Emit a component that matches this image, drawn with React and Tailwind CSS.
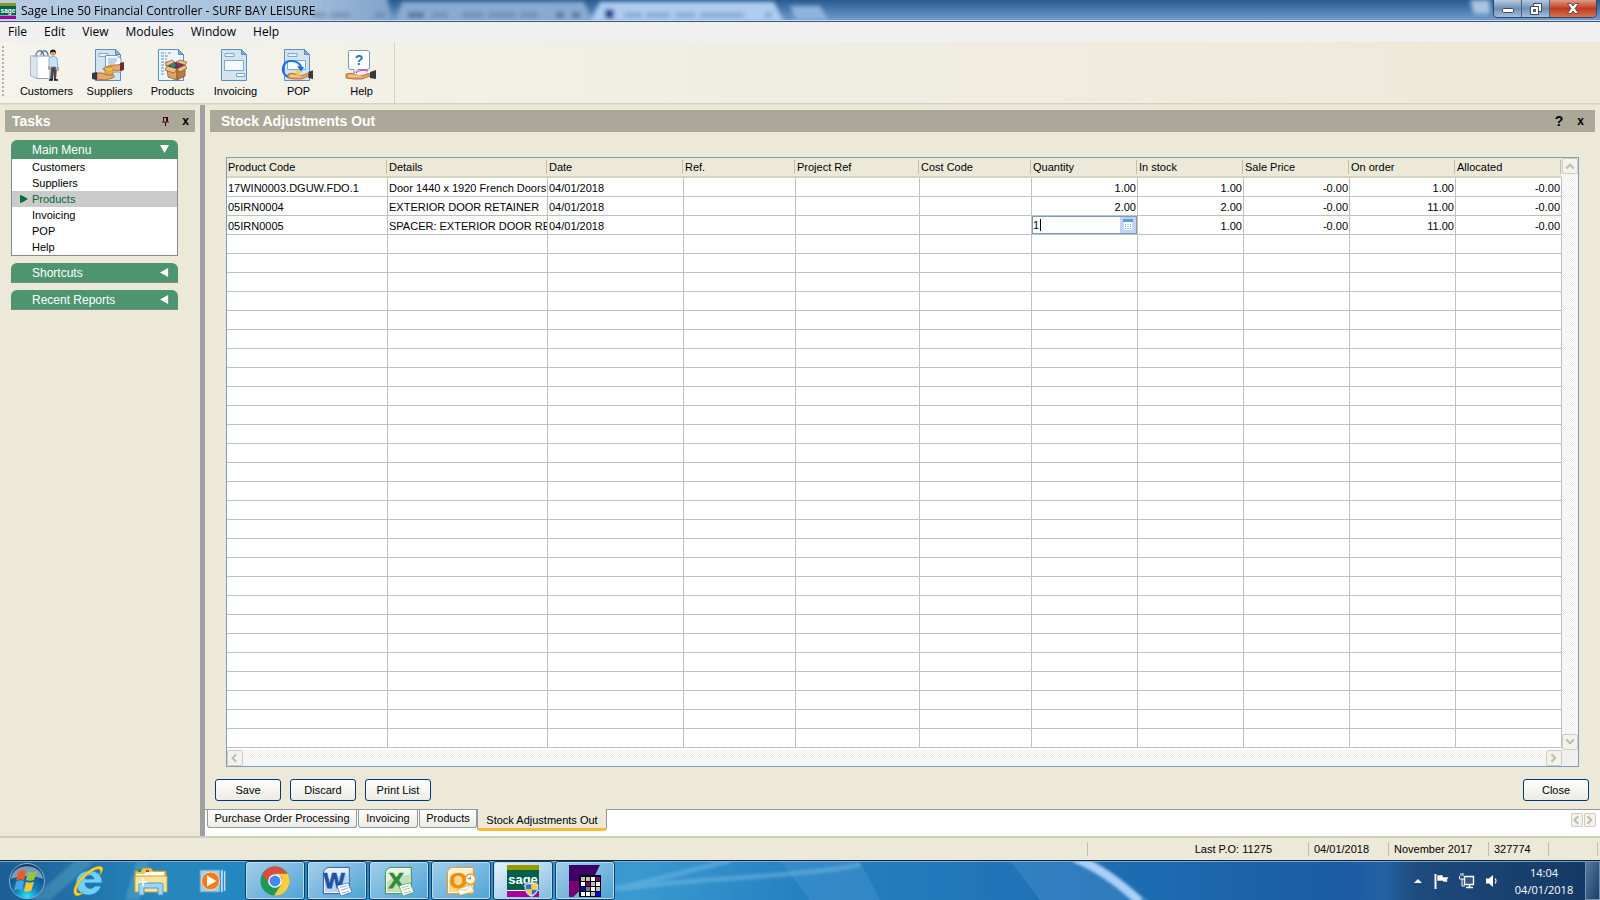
import { useState } from 'react'

const menus = ['File', 'Edit', 'View', 'Modules', 'Window', 'Help']

const modules = ['Customers', 'Suppliers', 'Products', 'Invoicing', 'POP', 'Help']

const columns = [
  { key: 'code', label: 'Product Code', width: 'w-[161px]' },
  { key: 'details', label: 'Details', width: 'w-[160px]' },
  { key: 'date', label: 'Date', width: 'w-[136px]' },
  { key: 'ref', label: 'Ref.', width: 'w-[112px]' },
  { key: 'projectRef', label: 'Project Ref', width: 'w-[124px]' },
  { key: 'costCode', label: 'Cost Code', width: 'w-[112px]' },
  { key: 'quantity', label: 'Quantity', width: 'w-[106px]', numeric: true },
  { key: 'inStock', label: 'In stock', width: 'w-[106px]', numeric: true },
  { key: 'salePrice', label: 'Sale Price', width: 'w-[106px]', numeric: true },
  { key: 'onOrder', label: 'On order', width: 'w-[106px]', numeric: true },
  { key: 'allocated', label: 'Allocated', width: 'w-[106px]', numeric: true },
]

const items = [
  { code: '17WIN0003.DGUW.FDO.1', details: 'Door 1440 x 1920 French Doors', date: '04/01/2018', quantity: '1.00', inStock: '1.00', salePrice: '-0.00', onOrder: '1.00', allocated: '-0.00' },
  { code: '05IRN0004', details: 'EXTERIOR DOOR RETAINER', date: '04/01/2018', quantity: '2.00', inStock: '2.00', salePrice: '-0.00', onOrder: '11.00', allocated: '-0.00' },
  { code: '05IRN0005', details: 'SPACER: EXTERIOR DOOR RE', date: '04/01/2018', editing: true, inStock: '1.00', salePrice: '-0.00', onOrder: '11.00', allocated: '-0.00' },
]

const rows = Array.from({ length: 30 }, (_, index) => items[index] || {})

const tabs = [
  { label: 'Purchase Order Processing', width: 'w-[150px]' },
  { label: 'Invoicing', width: 'w-[60px]' },
  { label: 'Products', width: 'w-[58px]' },
]

function SageLogo({ className }) {
  return <svg className={className} viewBox="0 0 32 32" aria-hidden="true">
    <rect width="32" height="32" fill="#fff" />
    <rect width="32" height="5" fill="#9a9a00" />
    <rect y="5" width="32" height="20" fill="#00614a" />
    <rect y="26" width="32" height="6" fill="#a800a0" />
    <text x="16" y="19" fill="#fff" fontFamily="Liberation Sans, sans-serif" fontWeight="700" fontSize="13" textAnchor="middle">sage</text>
  </svg>
}

function Sheet() {
  return <>
    <path d="M3.500 .5h20l5 5v26h-25z" fill="#d3e3f0" stroke="#5d8fba" />
    <path d="M23.500 .5v5h5z" fill="#7fb0d6" stroke="#5d8fba" />
    <path d="M7 4.500h9v3H7z" fill="#e8f2fa" stroke="#7ea8cc" />
  </>
}

function Hand() {
  return <>
    <path d="M0 25c4-1 7-1 10 1 3 1 7 1 11-1 2-1 4 0 3 2l-8 3H7l-7-1z" fill="#e8a765" stroke="#a05a28" strokeWidth=".8" />
    <path d="M24 23l6-2v9l-6-1z" fill="#38383c" />
    <path d="M3 27h12" stroke="#fbd9a8" strokeWidth="1.200" />
  </>
}

function ModuleIcon({ name }) {
  const drawings = {
    Customers: <>
      <path d="M7 7C7 0 14 0 15 7M12 6c1-6 7-5 7 1" fill="none" stroke="#5b7c99" strokeWidth="1.300" />
      <path d="M1.500 7H20v22.500H8l-6.500-3z" fill="#eef3f9" stroke="#8f9fb6" />
      <path d="M1.500 7L8 8v21.500l-6.500-3z" fill="#dde5f0" stroke="#a6b3c8" strokeWidth=".6" />
      <path d="M9 8h11v21H9z" fill="#fdfdff" />
      <path d="M22 18h6l-1 13h-2l-.5-8-.5 8h-3z" fill="#4a4a52" />
      <path d="M20 9c2-2 6-2 8 0l1 11-2 1v-3h-5v2h-2z" fill="#c9e2f4" stroke="#6e93b4" strokeWidth=".7" />
      <path d="M20 17v4M29 18v4" stroke="#c48552" strokeWidth="1.300" />
      <circle cx="24" cy="4" r="2.700" fill="#d49b6d" />
      <path d="M21 5c-1-6 7-6 6 0l-1-2h-4z" fill="#181818" />
      <path d="M20 31h4M25 31h4" stroke="#111" strokeWidth="1.500" />
    </>,
    Suppliers: <>
      <Sheet />
      <path d="M13.500 6.500H25l4 3V23H13.500z" fill="#f7fbff" stroke="#6d9cc5" />
      <path d="M16 10h9M16 12h9M16 14h7" stroke="#83a9cd" />
      <path d="M30 15l-5 1h-7l-6 3c-2 1 0 3 2 2l5-1 5 2 6-1z" fill="#eaa968" stroke="#a05a28" strokeWidth=".8" />
      <path d="M32 13l-4 1v8l4-1z" fill="#6b2f2d" />
      <path d="M13 19l4-2 4 2v7l-4 2-4-2z" fill="#d9ad42" stroke="#a77d20" strokeWidth=".7" />
      <path d="M13 19l4 2 4-2" fill="none" stroke="#f2d98a" />
      <path d="M5 24h5l5 2h5c3 0 3 3 0 3l-7 2-8-1z" fill="#eaa968" stroke="#a05a28" strokeWidth=".8" />
      <path d="M0 24l5-1v8l-5-1z" fill="#38383c" />
    </>,
    Products: <>
      <path d="M3.500 .5h20l5 5v26h-25z" fill="#eef5fb" stroke="#5d8fba" />
      <path d="M23.500 .5v5h5z" fill="#7fb0d6" stroke="#5d8fba" />
      <path d="M6 4h5M13 4h4M6 7h8M6 10h6M6 13h7M6 16h5M6 19h4M6 22h4M6 25h4" stroke="#5e93c2" strokeDasharray="3 1" />
      <path d="M12 17l10 3v11l-9-3z" fill="#dca36c" stroke="#8a5326" strokeWidth=".8" />
      <path d="M22 20l8-4v11l-8 4z" fill="#b97a44" stroke="#8a5326" strokeWidth=".8" />
      <path d="M12 17l8-4 10 3-8 4z" fill="#5a351d" />
      <circle cx="18" cy="16" r="2.500" fill="#1d8f8a" />
      <circle cx="24" cy="15.500" r="2.500" fill="#8a2a8f" />
      <path d="M12 17l-2 4 9 3 3-4zM30 16l2 3-7 4-3-3zM12 17l-2-3 7-3 3 2zM30 16l2-3-7-2-4 2z" fill="#edbf8b" stroke="#8a5326" strokeWidth=".7" />
    </>,
    Invoicing: <>
      <Sheet />
      <path d="M6.500 11.500h19v10h-19z" fill="#f6fafd" stroke="#7ea8cc" />
      <path d="M18.500 24.500h8v3h-8z" fill="#f6fafd" stroke="#7ea8cc" />
    </>,
    POP: <>
      <Sheet />
      <path d="M6.500 11.500h18v9h-18z" fill="#f6fafd" stroke="#7ea8cc" />
      <path d="M7 28C-1 24 1 12 10 12c6 0 9 3 10 6" fill="none" stroke="#1d6cf0" strokeWidth="2.200" />
      <path d="M16 17l7 1-3 5z" fill="#1d6cf0" />
      <circle cx="17" cy="23.500" r="3" fill="#f2ce58" />
      <g transform="translate(7 0) scale(.85 1)"><Hand /></g>
    </>,
    Help: <>
      <path d="M6 1.500h17c2 0 2.500 1 2.500 2.500v14c0 2-1 2.500-2.500 2.500H14L10 24v-3.500H7c-2 0-2.500-1-2.500-2.500V4c0-1.500 0-2.500 1.500-2.500z" fill="#fff" stroke="#7d97b1" />
      <text x="15" y="16" fill="#1978ab" fontFamily="Liberation Sans, sans-serif" fontWeight="700" fontSize="14" textAnchor="middle">?</text>
      <g transform="translate(2 0)">
        <path d="M10 24c3-3 7-3 12-2" fill="none" stroke="#f01fd8" />
        <Hand />
      </g>
    </>,
  }
  return <svg className="mr-1 h-8 w-8" viewBox="0 0 32 32" aria-hidden="true">{drawings[name]}</svg>
}

function WindowButtons() {
  return <div className="relative mr-[3px] flex h-[18px] self-start overflow-hidden rounded-b-[5px] border border-t-0 border-[#33455e]">
    <button type="button" aria-label="Minimise" className="flex w-7 items-center justify-center border-r border-[#4a6180] bg-linear-to-b from-[#b4c9df] via-[#6f90b5] to-[#a4bfdb]">
      <svg className="mt-1 h-[5px] w-3" viewBox="0 0 12 5"><rect x=".5" y=".5" width="11" height="4" rx="1" fill="#fff" stroke="#3f4a5a" /></svg>
    </button>
    <button type="button" aria-label="Restore" className="flex w-7 items-center justify-center border-r border-[#4a6180] bg-linear-to-b from-[#b4c9df] via-[#6f90b5] to-[#a4bfdb]">
      <svg className="h-3 w-3" viewBox="0 0 12 12">
        <path d="M3.500 .5h8v8h-8z" fill="#fff" stroke="#3f4a5a" />
        <path d="M.5 3.500h8v8h-8z" fill="#fff" stroke="#3f4a5a" />
        <path d="M3.500 6.500h2v2h-2z" fill="#6f90b5" stroke="#3f4a5a" />
      </svg>
    </button>
    <button type="button" aria-label="Close window" className="flex w-[46px] items-center justify-center bg-linear-to-b from-[#dd9a87] via-[#c03a1d] to-[#d9704e]">
      <svg className="h-[11px] w-3" viewBox="0 0 12 11"><path d="M.5 .5h3.500L6 3l2-2.500h3.500L8 5.500l3.500 5H8L6 8l-2 2.500H.5l3.500-5z" fill="#fff" stroke="#4a3a44" strokeWidth=".8" /></svg>
    </button>
  </div>
}

function TitleBar() {
  return <header className="relative flex h-[22px] shrink-0 items-center justify-between overflow-hidden border-b border-[#3d5572] bg-[#4d7db4]">
    <svg className="absolute inset-0 h-full w-full" viewBox="0 0 1600 21" preserveAspectRatio="xMinYMin slice" aria-hidden="true">
      <defs>
        <linearGradient id="sky" x1="0" x2="0" y1="0" y2="1"><stop offset="0" stopColor="#2a5b90" /><stop offset="1" stopColor="#729fd0" /></linearGradient>
        <linearGradient id="mist"><stop offset="0" stopColor="#b9cce2" /><stop offset=".75" stopColor="#a9c2de" /><stop offset="1" stopColor="#7fa2c8" /></linearGradient>
        <filter id="soft" x="-10%" y="-50%" width="120%" height="200%"><feGaussianBlur stdDeviation="2" /></filter>
      </defs>
      <rect width="1600" height="21" fill="url(#sky)" />
      <g filter="url(#soft)">
        <path d="M-20-6H386l8 34H-20z" fill="url(#mist)" />
        <path d="M402 2h182l8 20H395z" fill="#89abd0" />
        <path d="M600 2h174l10 20H590z" fill="#aecdf0" />
        <path d="M790 6h30l8 14h-32z" fill="#8fb4de" />
        <path d="M312 15h14M330 15h20M374 15h10M432 15h16M462 15h22M488 15h28M520 15h18" stroke="#51708f" strokeWidth="5" opacity=".45" />
        <path d="M408 15h16M556 15h8M572 15h8" stroke="#3b5777" strokeWidth="6" opacity=".6" />
        <path d="M605 14h9" stroke="#213f86" strokeWidth="9" />
        <path d="M624 15h18M646 15h24M675 15h20M700 15h44M765 15h7" stroke="#6d8fb8" strokeWidth="5" opacity=".6" />
        <path d="M1470 0h20v14h-16z" fill="#a9c5e2" />
      </g>
      <path d="M0 20.500h1600" stroke="#c8dcf0" />
    </svg>
    <div className="relative flex items-center">
      <SageLogo className="h-4 w-4" />
      <h1 className="ml-[5px] font-['Open_Sans','Noto_Sans',sans-serif] text-xs text-black">Sage Line 50 Financial Controller - SURF BAY LEISURE</h1>
    </div>
    <WindowButtons />
  </header>
}

function Toolbar() {
  return <div className="flex h-[62px] shrink-0 border-b border-[#d6d2c2] bg-linear-to-r from-[#f4f3ec] to-[#ece9d8]">
    <div className="mt-1 ml-0.5 h-[52px] w-0.5 bg-[repeating-linear-gradient(#b5b2a6_0_2px,transparent_2px_4px)]" />
    <div className="ml-[11px] flex border-r border-[#d6d2c2] pr-px">
      {modules.map((name) => <button key={name} type="button" className="flex w-[63px] flex-col items-center pt-[7px] text-[11px] leading-4">
        <ModuleIcon name={name} />
        <span className="mt-0.5">{name}</span>
      </button>)}
    </div>
  </div>
}

function Arrow({ direction, className }) {
  const paths = { down: 'M0 0h10L5 9z', left: 'M9 0v10L0 5z' }
  return <svg className={className} viewBox="0 0 10 10" aria-hidden="true"><path d={paths[direction]} fill="#fff" /></svg>
}

function TaskGroup({ title, open, children }) {
  return <section>
    <button type="button" className={`flex w-full items-center justify-between rounded-t-md bg-[#4c956f] pr-[9px] pl-[21px] text-xs text-white ${open ? 'h-[19px]' : 'h-5 border-b border-[#7d8b83]'}`}>
      {title}
      <Arrow direction={open ? 'down' : 'left'} className="h-[9px] w-[9px]" />
    </button>
    {open && children}
  </section>
}

function TaskPanel({ current, onSelect }) {
  return <aside className="w-[200px] shrink-0 bg-[#ece9d8] pt-[5px] pl-[5px]">
    <div className="mr-[5px] flex h-[22px] items-center bg-[#aca899] pl-[7px] text-black">
      <h2 className="flex-1 text-sm font-bold text-white">Tasks</h2>
      <button type="button" aria-label="Pin" className="mr-[13px]">
        <svg className="h-[9px] w-[7px]" viewBox="0 0 7 9"><path d="M1 .5h5M1.500 .5v4M4.500 .5v4M5.500 .5v4M0 5h7M3.500 5v4" fill="none" stroke="#3b0505" /></svg>
      </button>
      <button type="button" aria-label="Close tasks" className="mr-1.5 text-xs font-bold">x</button>
    </div>
    <div className="mt-2 mr-[22px] ml-1.5 space-y-[7px]">
      <TaskGroup title="Main Menu" open>
        <ul className="border border-t-0 border-[#8a8a8a] bg-white text-[11px] leading-4">
          {modules.map((name) => <li key={name}>
            <button type="button" onClick={() => onSelect(name)} className={`flex h-4 w-full items-center pl-2 ${current === name ? 'bg-[#cbcbcb] text-[#006838]' : 'text-black'}`}>
              <svg className="mr-1 h-2 w-2" viewBox="0 0 8 8" aria-hidden="true">{current === name && <path d="M0 0l3 1 5 3-5 3-3 1z" fill="#00733c" />}</svg>
              {name}
            </button>
          </li>)}
        </ul>
      </TaskGroup>
      <TaskGroup title="Shortcuts" />
      <TaskGroup title="Recent Reports" />
    </div>
  </aside>
}

function ScrollButton({ direction, className = 'h-4 w-4' }) {
  const paths = { up: 'M1 6l3-3 3 3', down: 'M1 2l3 3 3-3', left: 'M5 1L2 4l3 3', right: 'M2 1l3 3-3 3' }
  return <button type="button" aria-label={`Scroll ${direction}`} className={`flex shrink-0 items-center justify-center rounded-xs border border-[#d0cdbf] bg-[#f3f2ec] ${className}`}>
    <svg className="h-2.5 w-2.5" viewBox="0 0 8 8"><path d={paths[direction]} fill="none" stroke="#bfbcae" strokeWidth="1.600" /></svg>
  </button>
}

function QuantityEditor() {
  const [value, setValue] = useState('1')
  return <div className="flex h-[18px] border border-[#7f9db9] bg-white">
    <div className="flex min-w-0 flex-1 items-center">
      <input aria-label="Quantity" value={value} onChange={(event) => setValue(event.target.value)} className="w-[7px] shrink-0 outline-none" />
      <span className="h-3 w-px bg-black" />
    </div>
    <button type="button" aria-label="Calculator" className="flex w-4 items-center justify-center bg-[#c3d3f8]">
      <svg className="h-3 w-2.5" viewBox="0 0 10 12">
        <rect x=".5" y=".5" width="9" height="11" fill="#fff" stroke="#c3d8f8" />
        <path d="M0 0h10v3H0z" fill="#5d98ee" />
        <path d="M2 5.500h6M2 7.500h6M2 9.500h6" stroke="#6f9fe6" strokeDasharray="1 1.500" />
      </svg>
    </button>
  </div>
}

function StockGrid() {
  const track = 'bg-[repeating-conic-gradient(#ffffff_0_25%,#eeeeec_0_50%)] bg-[length:2px_2px]'
  return <div className="mr-[21px] ml-[21px] flex min-h-0 flex-1 flex-col border border-[#7f9db9] bg-white">
    <div className="flex min-h-0 flex-1">
      <div className="min-w-0 flex-1 overflow-hidden">
        <table className="w-full table-fixed border-separate border-spacing-0 text-[11px] leading-4">
          <thead>
            <tr className="bg-[#ece9d8]">
              {columns.map((column) => <th key={column.key} scope="col" className={`h-5 border-b-2 border-[#d6d2c2] p-0 text-left font-normal ${column.width}`}>
                <div className="mr-px h-[14px] border-r border-[#c2bfa8] pl-px leading-[14px]">{column.label}</div>
              </th>)}
            </tr>
          </thead>
          <tbody>
            {rows.map((row, index) => <tr key={index}>
              {columns.map((column) => {
                const editing = row.editing && column.key === 'quantity'
                return <td key={column.key} className={`h-[19px] overflow-hidden border-r border-b border-[#c0c0c0] whitespace-nowrap ${editing ? 'p-0' : 'px-px pt-0.5 pb-0'} ${column.numeric ? 'text-right' : ''}`}>
                  {editing ? <QuantityEditor /> : row[column.key]}
                </td>
              })}
            </tr>)}
          </tbody>
        </table>
      </div>
      <div className={`flex w-4 flex-col justify-between ${track}`}>
        <ScrollButton direction="up" />
        <ScrollButton direction="down" />
      </div>
    </div>
    <div className="flex">
      <div className={`flex flex-1 justify-between ${track}`}>
        <ScrollButton direction="left" />
        <ScrollButton direction="right" />
      </div>
      <div className="w-4 bg-[#f0f0f0]" />
    </div>
  </div>
}

function ActionButton({ children }) {
  return <button type="button" className="h-[22px] w-[66px] rounded-[3px] border border-[#003c74] bg-linear-to-b from-white to-[#ecebe4] text-[11px] leading-5">{children}</button>
}

function Workspace() {
  return <main className="flex min-w-0 flex-1 flex-col border-l-[5px] border-[#a0a0a0] bg-[#ece9d8] pt-[5px]">
    <div className="mr-[5px] ml-[5px] flex h-[22px] shrink-0 items-center bg-[#aca899] pl-[11px]">
      <h2 className="flex-1 text-sm font-bold text-white">Stock Adjustments Out</h2>
      <button type="button" aria-label="Help on this window" className="mr-[14px] text-sm font-bold">?</button>
      <button type="button" aria-label="Close view" className="mr-[11px] text-xs font-bold">x</button>
    </div>
    <div className="h-[25px] shrink-0" />
    <StockGrid />
    <div className="mt-3 mr-[11px] mb-2 ml-[10px] flex items-center gap-[9px]">
      <ActionButton>Save</ActionButton>
      <ActionButton>Discard</ActionButton>
      <ActionButton>Print List</ActionButton>
      <div className="ml-auto flex"><ActionButton>Close</ActionButton></div>
    </div>
    <nav className="flex h-[27px] shrink-0 items-start border-t border-[#919b9c] bg-white pl-0.5 text-[11px]">
      {tabs.map((tab) => <button key={tab.label} type="button" className={`mr-px h-[18px] shrink-0 rounded-b-[3px] border border-t-0 border-[#919b9c] bg-linear-to-b from-white to-[#ecebe6] leading-[17px] ${tab.width}`}>{tab.label}</button>)}
      <button type="button" className="-mt-px -ml-px h-[22px] w-[130px] shrink-0 rounded-b-[3px] border border-t-0 border-b-3 border-[#919b9c] border-b-[#fbb932] bg-[#ece9d8] pt-0.5 leading-4">Stock Adjustments Out</button>
      <div className="mt-[3px] mr-1 ml-auto flex">
        <ScrollButton direction="left" className="h-[14px] w-[12px]" />
        <ScrollButton direction="right" className="ml-px h-[14px] w-[12px]" />
      </div>
    </nav>
  </main>
}

function StatusBar() {
  const cell = 'flex h-[14px] items-center border-l border-[#c2bfa8]'
  return <footer className="flex h-6 shrink-0 items-center justify-end border-t-2 border-[#d0cdbf] bg-[#ece9d8] text-[11px]">
    <div className={`${cell} w-[221px] justify-end pr-[36px]`}>Last P.O: 11275</div>
    <div className={`${cell} w-20 pl-[5px]`}>04/01/2018</div>
    <div className={`${cell} w-[100px] pl-[5px]`}>November 2017</div>
    <div className={`${cell} w-[60px] pl-[5px]`}>327774</div>
    <div className={`${cell} mr-0.5 w-[50px] border-r`} />
  </footer>
}

function OfficeIcon({ letter, color, shade }) {
  return <svg className="h-[30px] w-[30px]" viewBox="0 0 32 32" aria-hidden="true">
    <path d="M9 1.500h20v28H1.500V9C1.500 4 4 1.500 9 1.500z" fill="#fff" stroke={color} />
    <path d="M9 3h18.500v25H3V9c0-4 2-6 6-6z" fill={shade} />
    <path d="M9 3h18.500v6C18 10 8 12 3 17V9c0-4 2-6 6-6z" fill="#fff" opacity=".6" />
    <text x="13" y="23" fill={color} stroke={color} strokeWidth=".8" fontFamily="Liberation Sans, sans-serif" fontWeight="700" fontSize="24" textAnchor="middle">{letter}</text>
    {letter === 'O' ? <>
      <circle cx="26" cy="14" r="5.500" fill="#fdf6e4" stroke="#e0a030" strokeWidth="1.500" />
      <path d="M26 11v3l-3-1" fill="none" stroke="#777" />
      <path d="M12 25l14-5 4 7-15 4z" fill="#fff" stroke="#dba63a" strokeWidth=".7" />
      <path d="M12 25l10 1 4-6" fill="none" stroke="#dba63a" strokeWidth=".7" />
    </> : <>
      <path d="M16 21l12-3 4 10-12 4z" fill="#fff" stroke={color} strokeWidth=".6" />
      <path d="M19 23l8-2M20 26l9-3M21 29l8-2" stroke={color} opacity=".5" />
    </>}
  </svg>
}

function ChromeIcon() {
  return <svg className="h-[30px] w-[30px]" viewBox="0 0 32 32" aria-hidden="true">
    <circle cx="16" cy="16" r="15.500" fill="#1f9a56" />
    <path d="M2.600 8.200A15.500 15.500 0 0 1 29.400 8.200H16L9.500 20z" fill="#dd4b3e" />
    <path d="M29.400 8.200A15.500 15.500 0 0 1 15 31.500L22.500 20 23 12l-7-3.800z" fill="#fccd42" />
    <circle cx="16" cy="16" r="7.300" fill="#fff" />
    <circle cx="16" cy="16" r="5.800" fill="#4586f3" />
  </svg>
}

function GridIcon() {
  const fills = ['#c0c0c0', '#c0c0c0', '#fff', '#800080', '#fff', '#800080', '#c0c0c0', '#fff', '#0000f0', '#808080', '#fff', '#c0c0c0', '#fff', '#fff', '#c0c0c0', '#0000f0']
  return <svg className="h-8 w-8" viewBox="0 0 32 32" aria-hidden="true">
    <path d="M0 0h31L25 12 4 32H0z" fill="#3c0068" />
    <path d="M0 16h12v6L4 32H0z" fill="#790070" />
    <path d="M10 10h22v22H10z" fill="#000" />
    {fills.map((fill, index) => <rect key={index} x={12 + (index % 4) * 5} y={12 + Math.floor(index / 4) * 5} width="4" height="4" fill={fill} />)}
  </svg>
}

function StartOrb() {
  return <svg className="h-[38px] w-[38px]" viewBox="0 0 38 38" aria-hidden="true">
    <defs>
      <radialGradient id="orb" cx=".5" cy=".95" r=".9"><stop offset="0" stopColor="#25e4ff" /><stop offset=".4" stopColor="#1379b4" /><stop offset="1" stopColor="#123a68" /></radialGradient>
    </defs>
    <circle cx="19" cy="19" r="17.500" fill="url(#orb)" stroke="#7fb6d8" />
    <path d="M3 17C5 0 33 0 35 17c-8-4-24-4-32 0z" fill="#fff" opacity=".45" />
    <path d="M10 10c3-2 6-2 8-1l-2 9c-3-1-5-1-8 1z" fill="#f0592a" />
    <path d="M20 10c3 1 6 1 9-1l-3 9c-3 1-5 1-8 0z" fill="#92c83e" />
    <path d="M8 20c3-2 5-2 8-1l-2 9c-3-1-6-1-8 1z" fill="#43a5e8" />
    <path d="M18 20c3 1 5 1 8 0l-3 9c-3 1-5 1-7 0z" fill="#fbc52c" />
  </svg>
}

function ExplorerIcon() {
  return <svg className="h-8 w-[34px]" viewBox="0 0 34 32" aria-hidden="true">
    <path d="M1 6h6l2-3h8l2 3h13v20H1z" fill="#e6c566" stroke="#b99439" />
    <path d="M4 4h3v3H4z" fill="#1aa234" /><path d="M12 5h3v3h-3z" fill="#d43c2a" /><path d="M21 8h3v3h-3z" fill="#2f7fe0" />
    <path d="M2 9h8l2-2h18v4H2z" fill="#fffbe5" />
    <path d="M1 11h32v16H1z" fill="#f6e39d" stroke="#c8a548" />
    <path d="M5 30V20c0-2 1-2 2-2h20c1 0 2 0 2 2v10h-5v-7H10v7z" fill="#9ed7f3" stroke="#5297c2" />
    <path d="M9 13v8M5 17h8" stroke="#fff" strokeWidth="1.500" />
  </svg>
}

function ExplorerBrowserIcon() {
  return <svg className="h-8 w-8" viewBox="0 0 32 32" aria-hidden="true">
    <path d="M30 18H13c0 6 7 7 10 3h6C25 34 4 33 4 18 4 2 31 1 30 18zM13 14h9c-1-5-8-5-9 0z" fill="#6fd0f8" stroke="#1e83c4" strokeWidth=".8" />
    <path d="M3 30C-4 21 22-3 30 2c2 2 0 5-2 8 2-8-3-7-10-2C9 14 3 23 5 27c1 2 5 1 7 0-3 3-7 5-9 3z" fill="#ffd428" stroke="#d79a10" strokeWidth=".6" />
  </svg>
}

function PlayerIcon() {
  return <svg className="h-7 w-7" viewBox="0 0 28 28" aria-hidden="true">
    <path d="M1 3h20v22H1z" fill="#9fcfe9" stroke="#5b9cc4" />
    <path d="M22 3h2v22h-2M25 4h1.500v20H25" fill="#bfe0f2" stroke="#5b9cc4" strokeWidth=".7" />
    <circle cx="11.500" cy="14" r="9" fill="#f47a1f" stroke="#fbd7b4" />
    <path d="M8 8.500v11l9.500-5.500z" fill="#fff" />
  </svg>
}

function SageTaskIcon() {
  return <div className="relative">
    <SageLogo className="h-8 w-8" />
    <svg className="absolute right-0 bottom-0 h-[15px] w-[15px]" viewBox="0 0 16 16" aria-hidden="true">
      <path d="M8 0l7 2c1 7-1 11-7 14C2 13 0 9 1 2z" fill="#e8edf3" stroke="#777" strokeWidth=".6" />
      <path d="M8 2v6H2V3zM8 14V8h6c-1 3-3 5-6 6z" fill="#2b6fd0" />
      <path d="M8 2v6h6V3zM8 14V8H2c1 3 3 5 6 6z" fill="#fbcc2d" />
    </svg>
  </div>
}

function TaskButton({ label, active, children }) {
  return <button type="button" aria-label={label} className={`flex h-full w-[60px] items-center justify-center rounded-[3px] border border-[#143f66] shadow-[inset_0_0_0_1px_#b7dcf0] ${active ? 'bg-linear-to-br from-[#eaf4fb] to-[#7fbbe0]' : 'bg-linear-to-br from-[#a3cfe9] to-[#4ba3d6]'}`}>{children}</button>
}

function Taskbar() {
  return <div className="relative flex h-10 shrink-0 items-center overflow-hidden border-t border-[#10283f] text-white">
    <svg className="absolute inset-0 h-full w-full" viewBox="0 0 1600 39" preserveAspectRatio="none" aria-hidden="true">
      <defs>
        <linearGradient id="bar">
          <stop offset="0" stopColor="#1c5e95" /><stop offset=".1" stopColor="#2686bd" /><stop offset=".2" stopColor="#2488c6" /><stop offset=".4" stopColor="#3a99d0" /><stop offset=".5" stopColor="#2681c0" />
          <stop offset=".72" stopColor="#1d6bb0" /><stop offset=".84" stopColor="#1a5ba2" /><stop offset=".865" stopColor="#2461a5" /><stop offset=".885" stopColor="#1e4b7d" /><stop offset="1" stopColor="#143763" />
        </linearGradient>
        <filter id="glow" x="-20%" y="-50%" width="140%" height="200%"><feGaussianBlur stdDeviation="1.500" /></filter>
      </defs>
      <rect width="1600" height="39" fill="url(#bar)" />
      <path d="M780 0h80l20 39h-70zM1010 0h70l70 39h-110z" fill="#64a8e0" opacity=".25" />
      <path d="M30 39L75 0h20L50 39zM125 39l12-39h12l-10 39z" fill="#8fd0d8" opacity=".25" filter="url(#glow)" />
      <path d="M600 30C650 22 690 8 730 0M620 28C700 16 780 18 860 4" fill="none" stroke="#8fcdf0" strokeWidth="5" opacity=".35" filter="url(#glow)" />
      <path d="M1075-3c25 10 45 25 65 44" fill="none" stroke="#a8d0f8" strokeWidth="9" filter="url(#glow)" />
      <path d="M0 .5h1600" stroke="#8fb8d8" opacity=".8" />
    </svg>
    <div className="relative flex h-full w-full items-center">
      <button type="button" aria-label="Start" className="ml-2"><StartOrb /></button>
      <button type="button" aria-label="Internet Explorer" className="ml-[26px]"><ExplorerBrowserIcon /></button>
      <button type="button" aria-label="Windows Explorer" className="ml-[30px]"><ExplorerIcon /></button>
      <button type="button" aria-label="Media Player" className="ml-[31px]"><PlayerIcon /></button>
      <div className="ml-[18px] flex h-full gap-0.5">
        <TaskButton label="Chrome"><ChromeIcon /></TaskButton>
        <TaskButton label="Word"><OfficeIcon letter="W" color="#1d52a4" shade="#bcd3f2" /></TaskButton>
        <TaskButton label="Excel"><OfficeIcon letter="X" color="#2f8a35" shade="#bfe0b8" /></TaskButton>
        <TaskButton label="Outlook"><OfficeIcon letter="O" color="#ea8f13" shade="#fbd783" /></TaskButton>
        <TaskButton label="Sage" active><SageTaskIcon /></TaskButton>
        <TaskButton label="Data grid"><GridIcon /></TaskButton>
      </div>
      <div className="ml-auto flex h-full items-center">
        <button type="button" aria-label="Show hidden icons" className="mr-3"><svg className="h-2 w-2" viewBox="0 0 8 8"><path d="M0 6l4-4 4 4z" fill="#fff" /></svg></button>
        <svg className="mr-[9px] h-4 w-4" viewBox="0 0 16 16" aria-hidden="true"><path d="M1.500 1v15" stroke="#fff" strokeWidth="2" /><path d="M3 2h6v2h6l-2 3 1 2H9V8H3z" fill="#fff" stroke="#1b2b3e" strokeWidth=".5" /></svg>
        <svg className="mr-2.5 h-4 w-4" viewBox="0 0 16 16" aria-hidden="true"><path d="M5.500 3.500h9v8h-9zM7 14.500h7M10.500 11.500v3" fill="#35567e" stroke="#fff" strokeWidth="1.400" /><path d="M.5 3v3h5V3M2 0v3M4 0v3M3 6v7h3" fill="none" stroke="#fff" /></svg>
        <svg className="mr-3.5 h-[14px] w-[14px]" viewBox="0 0 14 14" aria-hidden="true"><path d="M1 4.500h3L8 1v12L4 9.500H1z" fill="#fff" /><path d="M10 4.500c1.300 1.500 1.300 3.500 0 5" fill="none" stroke="#d5e2ef" strokeWidth="1.200" /></svg>
        <div className="mr-2.5 w-[62px] text-center font-['Open_Sans','Noto_Sans',sans-serif] text-[11px] leading-[17px]">
          <p>14:04</p>
          <p>04/01/2018</p>
        </div>
        <button type="button" aria-label="Show desktop" className="h-full w-[15px] border border-[#7592b0] bg-linear-to-br from-[#5a7ba0] to-[#1a3d68]" />
      </div>
    </div>
  </div>
}

export default function App() {
  const [current, setCurrent] = useState('Products')

  return <div className="flex h-screen flex-col overflow-hidden bg-[#ece9d8] font-['Liberation_Sans',Arial,sans-serif] text-black">
    <TitleBar />
    <nav className="flex h-5 shrink-0 items-center bg-[#f0f0f0] pl-2 font-['Open_Sans','Noto_Sans',sans-serif] text-xs">
      {menus.map((menu) => <button key={menu} type="button" className="mr-[17px]">{menu}</button>)}
    </nav>
    <Toolbar />
    <div className="flex min-h-0 flex-1 border-t border-[#e2dfce]">
      <TaskPanel current={current} onSelect={setCurrent} />
      <Workspace />
    </div>
    <StatusBar />
    <Taskbar />
  </div>
}
